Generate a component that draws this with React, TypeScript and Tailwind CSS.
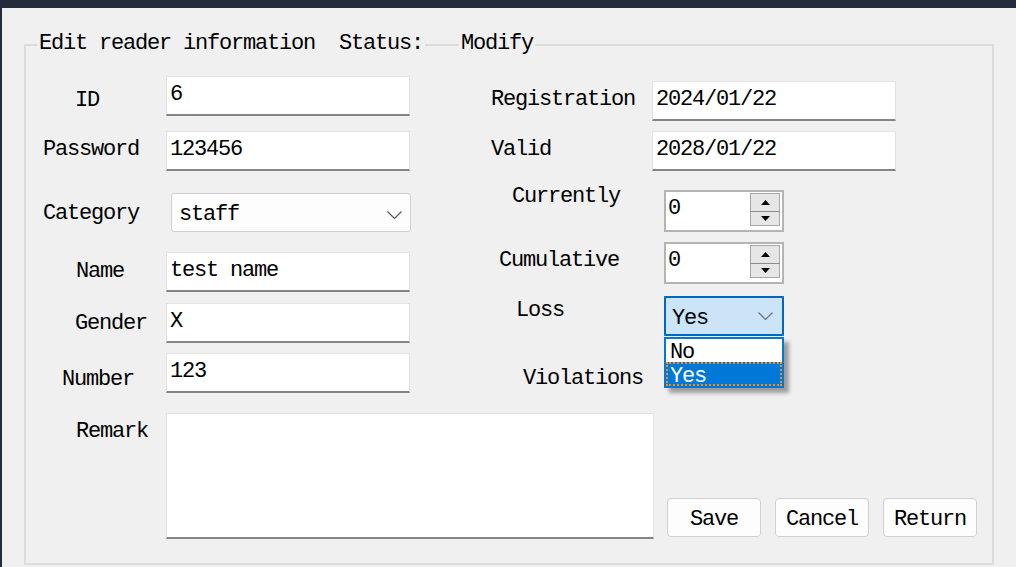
import React from "react";

const font =
  "font-[family-name:Liberation_Mono,Courier_New,monospace] text-[22px] leading-[24px] tracking-[-1.2px] text-black";

function Chevron({ color = "#606060" }: { color?: string }) {
  return (
    <svg width="15" height="8" viewBox="0 0 15 8" fill="none">
      <path d="M0.5 0.5l7 7 7-7" stroke={color} strokeWidth="1.3" />
    </svg>
  );
}

function TextBox({ value, className = "" }: { value: string; className?: string }) {
  return (
    <div
      className={`h-[40px] bg-white border border-[#e3e3e3] border-b-2 border-b-[#858585] pl-[3px] pt-[6px] whitespace-pre ${className}`}
    >
      {value}
    </div>
  );
}

function SpinBox({ value }: { value: string }) {
  return (
    <div className="w-[120px] h-[42px] border-2 border-[#b4b4b4] bg-white flex">
      <div className="flex-1 pl-[2px] pt-[5px]">{value}</div>
      <div className="w-[30px] mr-[2px] mt-[1px] flex flex-col">
        <div className="h-[19px] bg-[#e6e6e6] border border-[#a8a8a8] border-b-[#8c8c8c] flex items-center justify-center">
          <svg width="9" height="5" viewBox="0 0 9 5">
            <path d="M0 5L4.5 0 9 5z" fill="#000" />
          </svg>
        </div>
        <div className="h-[14px] bg-[#e6e6e6] border border-t-0 border-[#a8a8a8] flex items-center justify-center">
          <svg width="9" height="5" viewBox="0 0 9 5">
            <path d="M0 0L4.5 5 9 0z" fill="#000" />
          </svg>
        </div>
      </div>
    </div>
  );
}

function Btn({ children }: { children: React.ReactNode }) {
  return (
    <div className="w-[94px] h-[39px] rounded-[4px] border border-[#d0d0d0] bg-[#fdfdfd] flex items-center justify-center pt-[5px]">
      {children}
    </div>
  );
}

export default function App() {
  return (
    <div className={`w-[1016px] h-[567px] bg-[#252b3c] flex flex-col overflow-hidden ${font}`}>
      <div className="h-[8px] shrink-0" />
      <div className="flex-1 ml-[2px] bg-[#f0f0f0] pt-[36px] pl-[22px]">
        <div className="relative w-[970px] h-[521px] border-2 border-[#dcdcdc]">
          <span className="absolute -top-[14px] left-[11px] px-[2px] bg-[#f0f0f0] whitespace-pre">
            Edit reader information  Status:
          </span>
          <span className="absolute -top-[14px] left-[433px] px-[2px] bg-[#f0f0f0]">Modify</span>

          <div className="flex">
            {/* left column */}
            <div className="w-[454px] mt-[30px] flex flex-col">
              <div className="flex h-[55px]">
                <div className="w-[140px] pl-[49px] mt-[13px]">ID</div>
                <TextBox value="6" className="w-[244px]" />
              </div>
              <div className="flex h-[62px]">
                <div className="w-[140px] pl-[17px] mt-[7px]">Password</div>
                <TextBox value="123456" className="w-[244px]" />
              </div>
              <div className="flex h-[59px]">
                <div className="w-[140px] pl-[17px] mt-[9px]">Category</div>
                <div className="ml-[5px] w-[240px] h-[39px] border border-[#d0d0d0] rounded-[3px] bg-[#fdfdfd] flex items-center justify-between pl-[7px] pr-[8px] pt-[4px]">
                  <span>staff</span>
                  <Chevron />
                </div>
              </div>
              <div className="flex h-[51px]">
                <div className="w-[140px] pl-[50px] mt-[8px]">Name</div>
                <TextBox value="test name" className="w-[244px]" />
              </div>
              <div className="flex h-[50px]">
                <div className="w-[140px] pl-[49px] mt-[9px]">Gender</div>
                <TextBox value="X" className="w-[244px]" />
              </div>
              <div className="flex h-[60px]">
                <div className="w-[140px] pl-[36px] mt-[15px]">Number</div>
                <TextBox value="123" className="w-[244px]" />
              </div>
            </div>

            {/* right column */}
            <div className="mt-[35px] flex flex-col">
              <div className="flex h-[50px]">
                <div className="w-[172px] pl-[11px] mt-[7px]">Registration</div>
                <TextBox value="2024/01/22" className="w-[244px]" />
              </div>
              <div className="flex h-[59px]">
                <div className="w-[172px] pl-[11px] mt-[7px]">Valid</div>
                <TextBox value="2028/01/22" className="w-[244px]" />
              </div>
              <div className="flex h-[52px]">
                <div className="w-[184px] pl-[32px] -mt-[5px]">Currently</div>
                <SpinBox value="0" />
              </div>
              <div className="flex h-[54px]">
                <div className="w-[184px] pl-[19px] mt-[7px]">Cumulative</div>
                <SpinBox value="0" />
              </div>
              <div className="flex h-[69px]">
                <div className="w-[184px] pl-[36px] mt-[3px]">Loss</div>
                <div className="relative z-10">
                  <div className="w-[120px] h-[40px] border-2 border-[#0067c0] rounded-[1px] bg-[#cce4f7] flex items-center justify-between pl-[6px] pr-[9px]">
                    <span className="pt-[6px]">Yes</span>
                    <Chevron color="#6b7886" />
                  </div>
                  <div className="absolute left-0 top-[41px] w-[120px] h-[51px] border-2 border-[#0078d7] bg-white shadow-[5px_5px_4px_rgba(0,0,0,0.35)]">
                    <div className="h-[23px] pl-[4px] pt-[2px] leading-[23px]">No</div>
                    <div className="h-[24px] bg-[#0078d7] border-2 border-dotted border-[#ff8c1a] pl-[2px] pt-[3px] leading-[20px] text-white">
                      Yes
                    </div>
                  </div>
                </div>
              </div>
              <div className="flex">
                <div className="pl-[43px] mt-[2px]">Violations</div>
              </div>
            </div>
          </div>

          {/* remark row */}
          <div className="flex">
            <div className="w-[140px] pl-[50px] mt-[7px]">Remark</div>
            <div className="w-[488px] h-[126px] bg-white border border-[#e3e3e3] border-b-2 border-b-[#858585]" />
            <div className="self-end mb-[2px] ml-[13px] flex gap-[14px]">
              <Btn>Save</Btn>
              <Btn>Cancel</Btn>
              <Btn>Return</Btn>
            </div>
          </div>
        </div>
      </div>
    </div>
  );
}
